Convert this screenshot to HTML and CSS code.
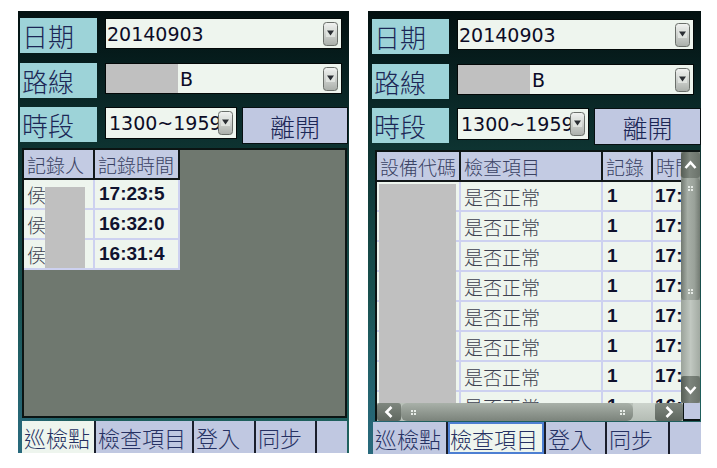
FILE: index.html
```html
<!DOCTYPE html>
<html lang="zh-Hant">
<head>
<meta charset="utf-8">
<title>巡檢</title>
<link rel="stylesheet" href="styles.css">
</head>
<body>
<div class="page">
  <section class="screen screen--a">
    <div class="row row--1">
      <div class="label">日期</div>
      <div class="field field--wide">
        <span class="field-text">20140903</span>
        <span class="dd"><svg width="15" height="24" viewBox="0 0 15 24"><defs><linearGradient id="dga" x1="0" y1="0" x2="0" y2="1"><stop offset="0" stop-color="#f2f4f2"/><stop offset="1" stop-color="#a9aea9"/></linearGradient></defs><rect x="0.5" y="0.5" width="14" height="23" rx="3" fill="url(#dga)" stroke="#6a6f6a"/><rect x="3" y="6" width="9" height="9" fill="#dfe3df"/><path d="M4 8.5h7l-3.5 5z" fill="#2a2e33"/></svg></span>
      </div>
    </div>
    <div class="row row--2">
      <div class="label">路線</div>
      <div class="field field--wide">
        <span class="mask-route"></span>
        <span class="field-text field-text--route">B</span>
        <span class="dd"><svg width="15" height="24" viewBox="0 0 15 24"><rect x="0.5" y="0.5" width="14" height="23" rx="3" fill="url(#dga)" stroke="#6a6f6a"/><rect x="3" y="6" width="9" height="9" fill="#dfe3df"/><path d="M4 8.5h7l-3.5 5z" fill="#2a2e33"/></svg></span>
      </div>
    </div>
    <div class="row row--3">
      <div class="label">時段</div>
      <div class="field field--short">
        <span class="field-text field-text--range">1300~1959</span>
        <span class="dd"><svg width="15" height="24" viewBox="0 0 15 24"><rect x="0.5" y="0.5" width="14" height="23" rx="3" fill="url(#dga)" stroke="#6a6f6a"/><rect x="3" y="6" width="9" height="9" fill="#dfe3df"/><path d="M4 8.5h7l-3.5 5z" fill="#2a2e33"/></svg></span>
      </div>
      <div class="btn-exit">離開</div>
    </div>
    <div class="grid grid--a">
      <table class="tbl tbl--a">
        <thead>
          <tr><th class="c-a1">記錄人</th><th class="c-a2">記錄時間</th></tr>
        </thead>
        <tbody>
          <tr><td class="cjk">侯</td><td class="num">17:23:5</td></tr>
          <tr><td class="cjk">侯</td><td class="num">16:32:0</td></tr>
          <tr><td class="cjk">侯</td><td class="num">16:31:4</td></tr>
        </tbody>
      </table>
      <span class="mask-name"></span>
    </div>
    <nav class="tabs tabs--a">
      <div class="tab tab--active t1">巡檢點</div>
      <div class="tab t2">檢查項目</div>
      <div class="tab t3">登入</div>
      <div class="tab t4">同步</div>
      <div class="tab t5"></div>
    </nav>
  </section>

  <section class="screen screen--b">
    <div class="row row--1">
      <div class="label">日期</div>
      <div class="field field--wide">
        <span class="field-text">20140903</span>
        <span class="dd"><svg width="15" height="24" viewBox="0 0 15 24"><rect x="0.5" y="0.5" width="14" height="23" rx="3" fill="url(#dga)" stroke="#6a6f6a"/><rect x="3" y="6" width="9" height="9" fill="#dfe3df"/><path d="M4 8.5h7l-3.5 5z" fill="#2a2e33"/></svg></span>
      </div>
    </div>
    <div class="row row--2">
      <div class="label">路線</div>
      <div class="field field--wide">
        <span class="mask-route"></span>
        <span class="field-text field-text--route">B</span>
        <span class="dd"><svg width="15" height="24" viewBox="0 0 15 24"><rect x="0.5" y="0.5" width="14" height="23" rx="3" fill="url(#dga)" stroke="#6a6f6a"/><rect x="3" y="6" width="9" height="9" fill="#dfe3df"/><path d="M4 8.5h7l-3.5 5z" fill="#2a2e33"/></svg></span>
      </div>
    </div>
    <div class="row row--3">
      <div class="label">時段</div>
      <div class="field field--short">
        <span class="field-text field-text--range">1300~1959</span>
        <span class="dd"><svg width="15" height="24" viewBox="0 0 15 24"><rect x="0.5" y="0.5" width="14" height="23" rx="3" fill="url(#dga)" stroke="#6a6f6a"/><rect x="3" y="6" width="9" height="9" fill="#dfe3df"/><path d="M4 8.5h7l-3.5 5z" fill="#2a2e33"/></svg></span>
      </div>
      <div class="btn-exit btn-exit--b">離開</div>
    </div>
    <div class="grid grid--b">
      <div class="grid-view">
        <table class="tbl tbl--b">
          <thead>
            <tr><th class="c-b1">設備代碼</th><th class="c-b2">檢查項目</th><th class="c-b3">記錄</th><th class="c-b4">時間</th></tr>
          </thead>
          <tbody>
            <tr><td></td><td class="cjk">是否正常</td><td class="num">1</td><td class="num num--tight">17:</td></tr>
            <tr><td></td><td class="cjk">是否正常</td><td class="num">1</td><td class="num num--tight">17:</td></tr>
            <tr><td></td><td class="cjk">是否正常</td><td class="num">1</td><td class="num num--tight">17:</td></tr>
            <tr><td></td><td class="cjk">是否正常</td><td class="num">1</td><td class="num num--tight">17:</td></tr>
            <tr><td></td><td class="cjk">是否正常</td><td class="num">1</td><td class="num num--tight">17:</td></tr>
            <tr><td></td><td class="cjk">是否正常</td><td class="num">1</td><td class="num num--tight">17:</td></tr>
            <tr><td></td><td class="cjk">是否正常</td><td class="num">1</td><td class="num num--tight">17:</td></tr>
            <tr><td></td><td class="cjk">是否正常</td><td class="num">1</td><td class="num num--tight">16:</td></tr>
          </tbody>
        </table>
        <span class="mask-code"></span>
      </div>
      <div class="vscroll">
        <div class="sbtn sbtn--v"><svg width="19" height="26" viewBox="0 0 19 26"><path d="M4.5 16l5-5.5 5 5.5" fill="none" stroke="#fff" stroke-width="2.6"/></svg></div>
        <div class="vthumb"><span class="grip"></span><span class="grip"></span></div>
        <div class="vtrack"></div>
        <div class="sbtn sbtn--v sbtn--down"><svg width="19" height="27" viewBox="0 0 19 27"><path d="M4.5 11l5 5.5 5-5.5" fill="none" stroke="#fff" stroke-width="2.6"/></svg></div>
      </div>
      <div class="hscroll">
        <div class="sbtn sbtn--h sbtn--left"><svg width="24" height="18" viewBox="0 0 24 18"><path d="M14.5 4l-5 5 5 5" fill="none" stroke="#fff" stroke-width="2.6"/></svg></div>
        <div class="hthumb"><span class="grip"></span><span class="grip"></span></div>
        <div class="htrack"></div>
        <div class="sbtn sbtn--h sbtn--right"><svg width="28" height="18" viewBox="0 0 28 18"><path d="M11.5 4l5 5-5 5" fill="none" stroke="#fff" stroke-width="2.6"/></svg></div>
        <div class="corner"></div>
      </div>
    </div>
    <nav class="tabs tabs--b">
      <div class="tab u1">巡檢點</div>
      <div class="tab tab--focus u2">檢查項目</div>
      <div class="tab u3">登入</div>
      <div class="tab u4">同步</div>
      <div class="tab u5"></div>
    </nav>
  </section>
</div>
</body>
</html>
```

FILE: styles.css
```css
html, body {
  margin: 0;
  background: #ffffff;
}

body {
  font-family: "Noto Sans CJK TC", "Noto Sans", sans-serif;
}

.page {
  display: flex;
  align-items: flex-start;
  gap: 19px;
  padding: 11px 0 0 18px;
}

.screen {
  display: flex;
  flex-direction: column;
  box-sizing: border-box;
  background:
    radial-gradient(ellipse 60px 160px at 0% 100%, rgba(48, 112, 150, 0.55), rgba(48, 112, 150, 0) 100%),
    linear-gradient(180deg, #031010 0%, #072020 14%, #0e3432 32%, #164a48 55%, #1c5a58 78%, #20625f 100%);
}

.screen--a {
  width: 331px;
  height: 442px;
  padding: 7px 0 0 2px;
}

.screen--b {
  width: 333px;
  height: 443px;
  padding: 8px 0 0 4px;
}

/* form rows */
.row {
  display: flex;
  align-items: flex-start;
}

.row--1 { margin-bottom: 10px; }
.row--2 { margin-bottom: 9px; }

.label {
  width: 77px;
  height: 35px;
  box-sizing: border-box;
  padding-left: 2px;
  background: #9dd3d8;
  color: #1c2756;
  font-size: 26px;
  line-height: 35px;
  font-weight: 300;
  white-space: nowrap;
}

.field {
  display: flex;
  align-items: center;
  margin: 1px 0 0 9px;
  height: 29px;
  background: #eef5ee;
  box-shadow: 0 0 0 1px #030808;
  overflow: hidden;
}

.field--wide { width: 235px; }
.field--short { width: 130px; height: 30px; }

.field-text {
  flex: 1;
  min-width: 0;
  overflow: hidden;
  white-space: nowrap;
  padding-left: 1px;
  font-family: "DejaVu Sans", sans-serif;
  font-size: 19px;
  color: #0c0c26;
}

.field-text--route {
  padding-left: 2px;
}

.field-text--range {
  padding-left: 3px;
}

.mask-route {
  flex: none;
  width: 72px;
  align-self: stretch;
  background: #c0c0c0;
}

.dd {
  flex: none;
  display: flex;
  width: 15px;
  height: 24px;
  margin-right: 3px;
}

.btn-exit {
  display: flex;
  align-items: center;
  justify-content: center;
  margin-left: 6px;
  width: 106px;
  height: 37px;
  box-sizing: border-box;
  border: 1px solid #071012;
  background: #c0c8e1;
  color: #1c2756;
  font-size: 25px;
  font-weight: 300;
}

.btn-exit--b { width: 107px; }

/* grids */
.grid {
  position: relative;
  box-sizing: border-box;
  background: #6f786f;
  overflow: hidden;
}

.grid--a {
  margin: 4px 0 0 2px;
  width: 325px;
  height: 270px;
  border: 2px solid #0b1413;
}

.grid--b {
  display: grid;
  grid-template-columns: 304px 19px;
  grid-template-rows: 251px 18px;
  margin: 5px 0 0 3px;
  width: 325px;
  height: 271px;
  border-left: 2px solid #0b1413;
  border-top: 2px solid #0b1413;
}

.grid-view {
  position: relative;
  overflow: hidden;
}

.tbl {
  border-collapse: separate;
  border-spacing: 0;
  table-layout: fixed;
}

.tbl th {
  box-sizing: border-box;
  height: 30px;
  padding: 0 0 0 3px;
  background: #c3cbe3;
  border-right: 2px solid #121819;
  border-bottom: 2px solid #121819;
  color: #3a4263;
  font-size: 19px;
  font-weight: 300;
  text-align: left;
  white-space: nowrap;
  overflow: hidden;
}

.tbl td {
  box-sizing: border-box;
  height: 30px;
  padding: 0 0 0 3px;
  background: #eef5ee;
  border-right: 2px solid #cdd1f0;
  border-bottom: 2px solid #cdd1f0;
  white-space: nowrap;
  overflow: hidden;
}

.tbl .cjk {
  color: #3c3f4f;
  font-size: 19px;
  font-weight: 300;
}

.tbl .num {
  font-family: "Liberation Sans", sans-serif;
  font-weight: 700;
  font-size: 19px;
  color: #10122e;
  padding-left: 4px;
}

.tbl .num--tight {
  padding-left: 2px;
}

.tbl--a { width: 156px; }
.c-a1 { width: 71px; }
.c-a2 { width: 85px; }

.tbl--b { width: 346px; }
.c-b1 { width: 84px; }
.c-b2 { width: 142px; }
.c-b3 { width: 50px; }
.c-b4 { width: 70px; }

.mask-name {
  position: absolute;
  left: 21px;
  top: 37px;
  width: 40px;
  height: 81px;
  background: #c0c0c0;
}

.mask-code {
  position: absolute;
  left: 2px;
  top: 32px;
  width: 77px;
  height: 230px;
  background: #c0c0c0;
}

/* scrollbars */
.vscroll {
  display: flex;
  flex-direction: column;
  background: #8d958d;
}

.sbtn {
  display: flex;
  flex: none;
  box-sizing: border-box;
  border-radius: 3px;
}

.sbtn--v {
  height: 26px;
  background: linear-gradient(90deg, #555d55 0%, #7d857d 45%, #6a726a 100%);
}

.sbtn--down { height: 27px; }

.vthumb {
  display: flex;
  flex-direction: column;
  justify-content: space-between;
  align-items: center;
  flex: none;
  height: 122px;
  box-sizing: border-box;
  padding: 8px 0 6px;
  border-radius: 4px;
  background: linear-gradient(90deg, #6f776f 0%, #a7afa7 35%, #9aa29a 70%, #737b73 100%);
}

.vtrack {
  flex: 1;
  background: linear-gradient(90deg, #9aa29a 0%, #c1c8c1 50%, #a2aaa2 100%);
}

.hscroll {
  grid-column: 1 / span 2;
  display: flex;
  background: #b9c1b9;
}

.sbtn--h {
  background: linear-gradient(180deg, #7f877f 0%, #5f675f 100%);
}

.sbtn--left { width: 24px; }
.sbtn--right { width: 28px; }

.hthumb {
  display: flex;
  justify-content: space-between;
  align-items: center;
  flex: none;
  width: 232px;
  box-sizing: border-box;
  padding: 0 8px 0 10px;
  border-radius: 6px;
  background: linear-gradient(180deg, #a9b1a9 0%, #8f978f 55%, #7b837b 100%);
}

.htrack {
  flex: 1;
  background: linear-gradient(180deg, #cdd4cd 0%, #b4bcb4 100%);
}

.corner {
  flex: none;
  width: 17px;
  box-sizing: border-box;
  background: #c0c8e1;
  border-bottom: 2px solid #0b1413;
  border-left: 1px solid #0b1413;
}

.grip {
  width: 5px;
  height: 5px;
  background:
    radial-gradient(circle at 1px 1px, #e6ebe6 1px, transparent 1.2px) 0 0 / 3px 3px;
}

/* tabs */
.tabs {
  display: flex;
  height: 32px;
  background: #c0c8e1;
}

.tabs--a {
  margin: 3px 0 0 2px;
  width: 325px;
}

.tabs--b {
  margin: 1px 0 0 1px;
  width: 328px;
}

.tab {
  flex: none;
  box-sizing: border-box;
  padding-left: 2px;
  border-right: 2px solid #1a1e2b;
  color: #263163;
  font-size: 22px;
  font-weight: 300;
  line-height: 32px;
  white-space: nowrap;
  overflow: hidden;
}

.tab:last-child { border-right: 0; }

.tab--active { background: #eef5ee; }

.tab--focus {
  background: #eef5ee;
  box-shadow: inset 0 0 0 2px #4d7fd2;
}

.t1 { width: 74px; }
.t2 { width: 98px; }
.t3 { width: 62px; }
.t4 { width: 61px; }
.t5 { width: 30px; }

.u1 { width: 75px; }
.u2 { width: 98px; }
.u3 { width: 61px; }
.u4 { width: 63px; }
.u5 { width: 31px; }
```
